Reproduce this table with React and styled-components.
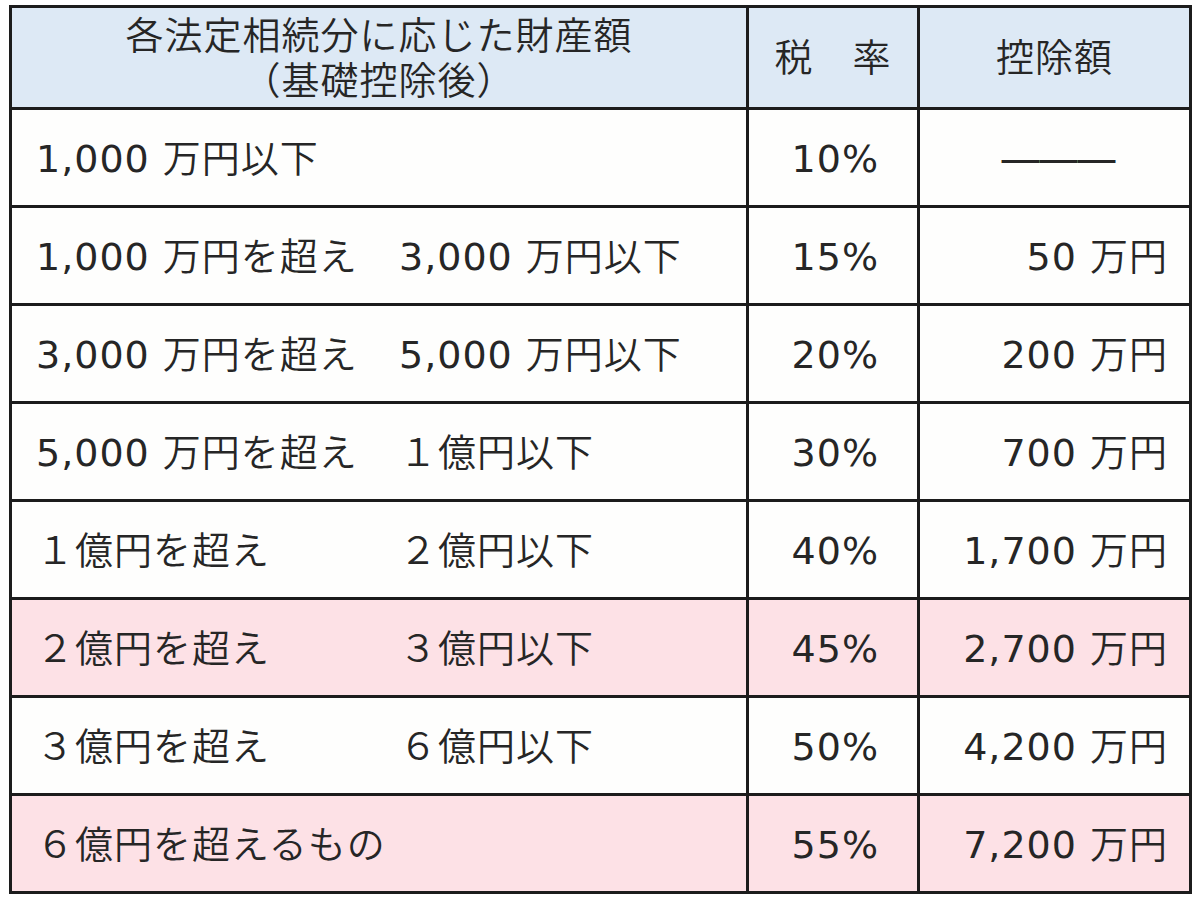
import styled, { createGlobalStyle } from "styled-components";

const GlobalStyle = createGlobalStyle`
  html, body {
    margin: 0;
    padding: 0;
    background: #ffffff;
  }
  body {
    font-family: "DejaVu Sans", "Noto Sans CJK JP DemiLight", "Noto Sans CJK JP", sans-serif;
    color: #262626;
  }
`;

const Page = styled.div`
  padding: 5px 0 0 9px;
`;

const Table = styled.table`
  width: 1180px;
  border-collapse: collapse;
  table-layout: fixed;
  font-size: 38px;
  letter-spacing: 1px;
  line-height: 1;
`;

const Head = styled.th`
  background: #dde9f5;
  border: 3px solid #1c1c1c;
  height: 97px;
  padding: 2px 0 0;
  font-weight: normal;
  text-align: center;
  vertical-align: middle;
  line-height: 45px;
`;

const Cell = styled.td`
  background: ${(p) => (p.$pink ? "#fde1e6" : "#fefefd")};
  border: 3px solid #1c1c1c;
  height: 93px;
  padding: 2px ${(p) => p.$pad ?? 22}px 0 ${(p) => p.$padLeft ?? 24}px;
  text-align: ${(p) => p.$align || "left"};
  vertical-align: middle;
  white-space: nowrap;
`;

const Range = styled.div`
  display: flex;
  align-items: baseline;
`;

const From = styled.span`
  width: 363px;
  flex: none;
`;

const Dash = styled.span`
  display: inline-block;
  font-size: 42px;
  letter-spacing: -4px;
  margin-right: -4px;
`;

const rows = [
  { from: "1,000 万円以下", rate: "10%", deduct: null },
  { from: "1,000 万円を超え", to: "3,000 万円以下", rate: "15%", deduct: "50 万円" },
  { from: "3,000 万円を超え", to: "5,000 万円以下", rate: "20%", deduct: "200 万円" },
  { from: "5,000 万円を超え", to: "１億円以下", rate: "30%", deduct: "700 万円" },
  { from: "１億円を超え", to: "２億円以下", rate: "40%", deduct: "1,700 万円" },
  { from: "２億円を超え", to: "３億円以下", rate: "45%", deduct: "2,700 万円", pink: true },
  { from: "３億円を超え", to: "６億円以下", rate: "50%", deduct: "4,200 万円" },
  { from: "６億円を超えるもの", rate: "55%", deduct: "7,200 万円", pink: true },
];

export default function App() {
  return (
    <Page>
      <GlobalStyle />
      <Table>
        <colgroup>
          <col style={{ width: 737 }} />
          <col style={{ width: 171 }} />
          <col style={{ width: 272 }} />
        </colgroup>
        <thead>
          <tr>
            <Head>
              各法定相続分に応じた財産額
              <br />
              （基礎控除後）
            </Head>
            <Head>税　率</Head>
            <Head>控除額</Head>
          </tr>
        </thead>
        <tbody>
          {rows.map((r) => (
            <tr key={r.rate}>
              <Cell $pink={r.pink}>
                <Range>
                  <From>{r.from}</From>
                  {r.to && <span>{r.to}</span>}
                </Range>
              </Cell>
              <Cell $pink={r.pink} $align="right" $pad={38}>
                {r.rate}
              </Cell>
              {r.deduct ? (
                <Cell $pink={r.pink} $align="right" $pad={21}>
                  {r.deduct}
                </Cell>
              ) : (
                <Cell $pink={r.pink} $align="center" $pad={0} $padLeft={0}>
                  <Dash>———</Dash>
                </Cell>
              )}
            </tr>
          ))}
        </tbody>
      </Table>
    </Page>
  );
}
